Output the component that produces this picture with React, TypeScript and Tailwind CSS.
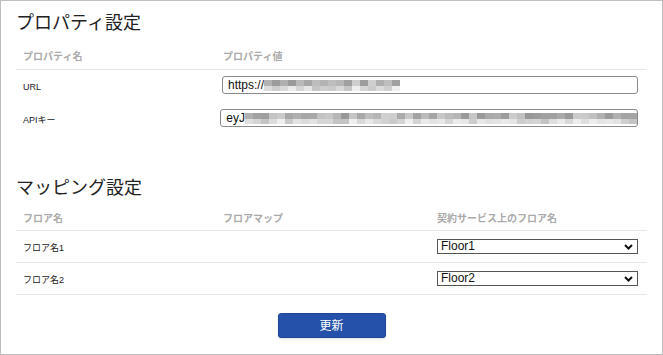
import { ChangeEvent, useState } from "react";

const FONT = '"Liberation Sans", "Noto Sans CJK JP", sans-serif';

// pseudo-random gray blocks that stand in for the masked values
function mosaic(count: number, seed: number) {
  const out: [number, number][] = [];
  let s = seed;
  for (let i = 0; i < count; i++) {
    s = (s * 9301 + 49297) % 233280;
    const a = 150 + Math.floor((s / 233280) * 60);
    s = (s * 9301 + 49297) % 233280;
    const b = 195 + Math.floor((s / 233280) * 45);
    out.push([a, b]);
  }
  return out;
}

function Masked({ count, seed }: { count: number; seed: number }) {
  const cells = mosaic(count, seed);
  return (
    <span className="flex h-[11px] flex-col">
      <span className="flex h-[6px]">
        {cells.map(([a], i) => (
          <span key={i} className="h-[6px] w-[8px]" style={{ background: `rgb(${a},${a},${a})` }} />
        ))}
      </span>
      <span className="flex h-[5px]">
        {cells.map(([, b], i) => (
          <span key={i} className="h-[5px] w-[8px]" style={{ background: `rgb(${b},${b},${b})` }} />
        ))}
      </span>
    </span>
  );
}

function PropRow({ label, prefix, count, seed }: { label: string; prefix: string; count: number; seed: number }) {
  return (
    <div className="flex h-[33px]">
      <div className="w-[206px] pl-[7px] pt-[10px] text-[9px] leading-[14px] text-[#222]">{label}</div>
      <div className="flex-1 pt-[6px] pr-[9px]">
        <div className="flex h-[18px] items-center overflow-hidden rounded-[3px] border border-[#8a8a8a] bg-white pl-[5px]">
          <span className="text-[12px] leading-[16px] text-[#111]">{prefix}</span>
          <Masked count={count} seed={seed} />
        </div>
      </div>
    </div>
  );
}

function FloorRow({ label, value, onChange }: { label: string; value: string; onChange: (v: string) => void }) {
  return (
    <div className="flex h-[32px] border-b border-[#e6e6e6]">
      <div className="w-[200px] pl-[7px] pt-[10px] text-[9px] leading-[14px] text-[#222]">{label}</div>
      <div className="w-[214px]" />
      <div className="flex-1 pl-[7px] pr-[9px] pt-[8px]">
        <div className="relative h-[15px]">
          <select
            value={value}
            onChange={(e: ChangeEvent<HTMLSelectElement>) => onChange(e.target.value)}
            className="block h-[15px] w-full appearance-none rounded-none border border-[#555] bg-white py-0 pl-[3px] text-[12px] leading-[13px] text-[#111] outline-none"
          >
            <option>Floor1</option>
            <option>Floor2</option>
          </select>
          <svg className="pointer-events-none absolute right-[5px] top-[5px]" width="9" height="6" viewBox="0 0 9 6">
            <path d="M1 1l3.5 3.5L8 1" fill="none" stroke="#111" strokeWidth="2" />
          </svg>
        </div>
      </div>
    </div>
  );
}

export default function App() {
  const [floors, setFloors] = useState(["Floor1", "Floor2"]);

  return (
    <div
      className="h-[355px] w-[663px] border border-[#bdbdbd] bg-white pl-[15px] pr-[15px] pt-[8px]"
      style={{ fontFamily: FONT }}
    >
      <h2 className="h-[28px] text-[18px] leading-[28px] text-[#222]">プロパティ設定</h2>

      <div className="mt-[8px] flex h-[25px] border-b border-[#e6e6e6] text-[10px] font-bold leading-[14px] text-[#aaa]">
        <div className="w-[200px] pl-[7px] pt-[5px]">プロパティ名</div>
        <div className="pl-[7px] pt-[5px]">プロパティ値</div>
      </div>
      <PropRow label="URL" prefix="https://" count={17} seed={7} />
      <PropRow label="APIキー" prefix="eyJ" count={49} seed={31} />

      <h2 className="mt-[38px] h-[28px] text-[18px] leading-[28px] text-[#222]">マッピング設定</h2>

      <div className="mt-[4px] flex h-[25px] border-b border-[#e6e6e6] text-[10px] font-bold leading-[14px] text-[#aaa]">
        <div className="w-[200px] pl-[7px] pt-[6px]">フロア名</div>
        <div className="w-[214px] pl-[7px] pt-[6px]">フロアマップ</div>
        <div className="pl-[7px] pt-[6px]">契約サービス上のフロア名</div>
      </div>
      {["フロア名1", "フロア名2"].map((label, i) => (
        <FloorRow
          key={label}
          label={label}
          value={floors[i]}
          onChange={(v) => setFloors((f) => f.map((x, j) => (j === i ? v : x)))}
        />
      ))}

      <div className="flex justify-center pt-[18px]">
        <button className="h-[25px] w-[108px] rounded-[3px] border border-[#1f4596] bg-[#2551aa] text-[12px] text-white shadow-sm">
          更新
        </button>
      </div>
    </div>
  );
}
